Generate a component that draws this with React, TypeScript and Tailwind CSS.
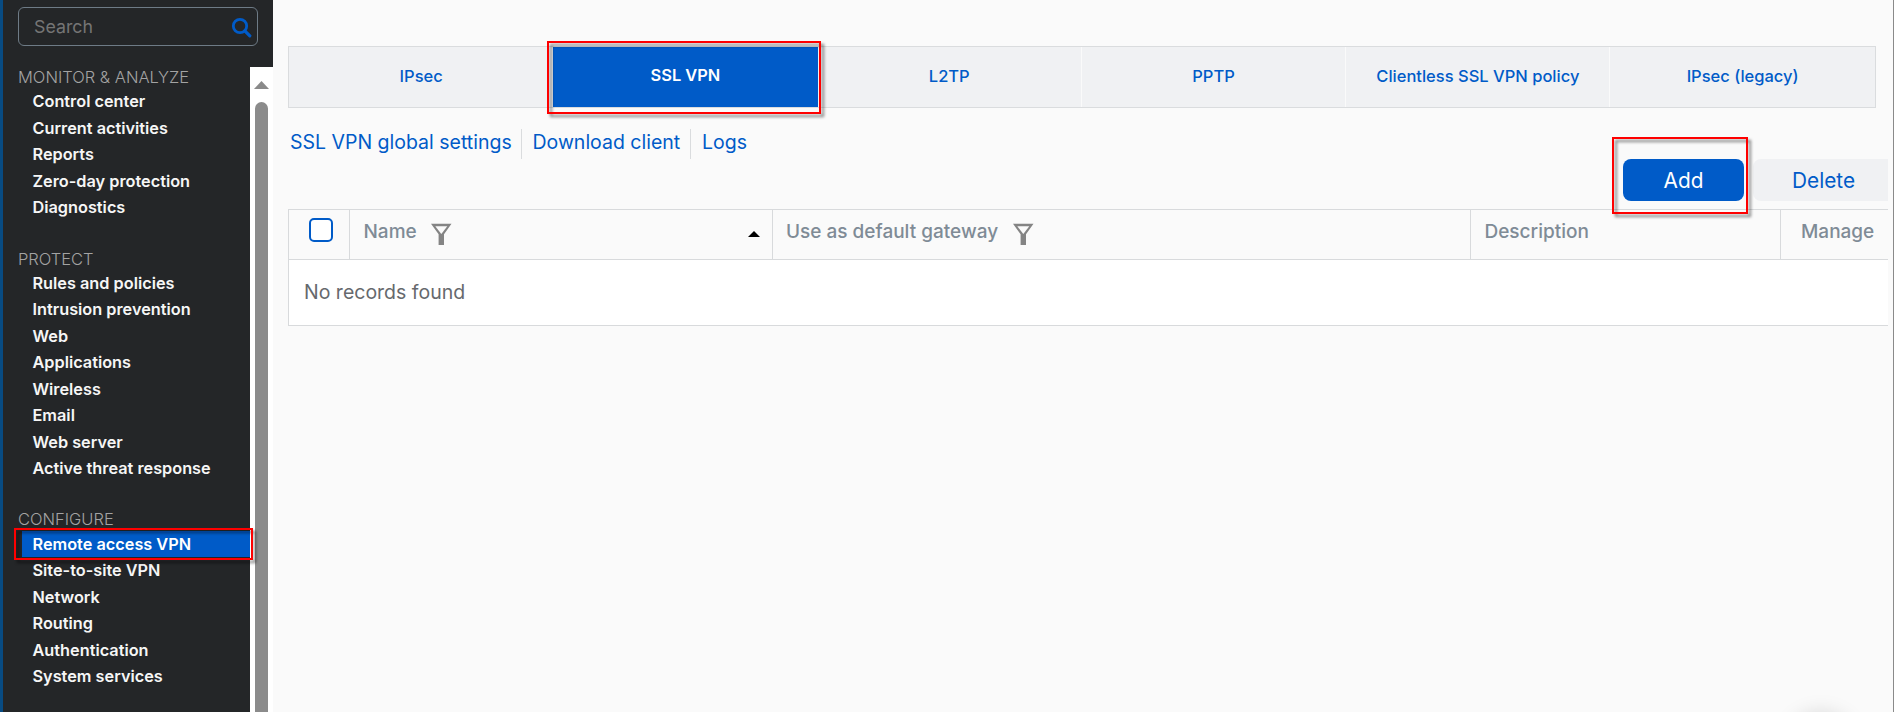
import React from "react";

const sections = [
  {
    title: "MONITOR & ANALYZE",
    items: ["Control center", "Current activities", "Reports", "Zero-day protection", "Diagnostics"],
  },
  {
    title: "PROTECT",
    items: [
      "Rules and policies",
      "Intrusion prevention",
      "Web",
      "Applications",
      "Wireless",
      "Email",
      "Web server",
      "Active threat response",
    ],
  },
  {
    title: "CONFIGURE",
    items: [
      "Remote access VPN",
      "Site-to-site VPN",
      "Network",
      "Routing",
      "Authentication",
      "System services",
    ],
  },
];

const tabs = ["IPsec", "SSL VPN", "L2TP", "PPTP", "Clientless SSL VPN policy", "IPsec (legacy)"];

/* Red outline that marks a control, with a soft drop shadow. */
function Marker({ className }: { className: string }) {
  return (
    <span
      className={`pointer-events-none absolute z-10 border-2 border-[#fe0000] drop-shadow-[3px_3px_1.5px_rgba(0,0,0,0.5)] ${className}`}
    />
  );
}

function FilterIcon() {
  return (
    <svg width="21" height="22" viewBox="0 0 21 22" className="shrink-0">
      <path d="M0 .8h20.5L13 11.3V22H7.6V11.3Z" fill="#848484" />
      <path d="M4.3 3.3h12L10.3 11Z" fill="#fafafa" />
    </svg>
  );
}

function Sidebar() {
  return (
    <aside className="flex h-full w-[273px] shrink-0 flex-col border-l-3 border-[#084b82] bg-[#242628]">
      <div className="flex h-[67px] shrink-0 items-start pt-[7px] pl-[15px]">
        <div className="flex h-[39px] w-[240px] items-center justify-between rounded-[6px] border border-[#6e7b86] pr-[5px] pl-[15px]">
          <span className="text-[17.8px] leading-[38px] text-[#757575]">Search</span>
          <svg width="21" height="21" viewBox="0 0 21 21" className="mt-px">
            <circle cx="9" cy="9" r="6.7" fill="none" stroke="#005bc8" strokeWidth="2.8" />
            <path d="M13.8 13.8l5 5" stroke="#005bc8" strokeWidth="3.2" strokeLinecap="round" />
          </svg>
        </div>
      </div>
      <div className="flex min-h-0 flex-1">
        <nav className="flex w-[247px] shrink-0 flex-col gap-[28px]">
          {sections.map((s) => (
            <section key={s.title} className="flex flex-col">
              <h2 className="h-[21.4px] pl-[15px] text-[16.5px] leading-[21px] font-light text-[#a3a3a3]">
                {s.title}
              </h2>
              {s.items.map((item) =>
                item === "Remote access VPN" ? (
                  <div
                    key={item}
                    className="relative ml-[19px] h-[26.45px] bg-[#005bc8] pl-[10.5px] text-[16.3px] leading-[26.45px] font-semibold text-white"
                  >
                    {item}
                    <Marker className="-top-[3px] -left-[8px] h-[32px] w-[239px]" />
                  </div>
                ) : (
                  <div
                    key={item}
                    className="h-[26.45px] pl-[29.5px] text-[16.3px] leading-[26.45px] font-semibold text-[#f6f6f6]"
                  >
                    {item}
                  </div>
                ),
              )}
            </section>
          ))}
        </nav>
        <div className="flex w-[23px] flex-col bg-white pl-[4px]">
          <svg width="15" height="8" viewBox="0 0 15 8" className="mt-[14px] shrink-0">
            <path d="M0 8L7.5 0 15 8Z" fill="#8a8a8a" />
          </svg>
          <div className="mt-[13px] ml-px w-[13px] flex-1 rounded-t-full bg-[#8b8b8b]" />
        </div>
      </div>
    </aside>
  );
}

function Tabs() {
  return (
    <div className="flex h-[62px] w-[1588px] border border-[#dadcde] bg-[#f0f1f3]">
      {tabs.map((t, i) =>
        t === "SSL VPN" ? (
          <div
            key={t}
            className="relative flex w-[264.3px] justify-center bg-[#005bc8] text-[16.4px] leading-[57px] font-semibold text-white"
          >
            {t}
            <Marker className="-top-[6px] -left-[6px] h-[73px] w-[274px]" />
          </div>
        ) : (
          <div
            key={t}
            className={`flex w-[264.3px] justify-center text-[16.5px] leading-[59px] font-medium text-[#005bc8] ${
              i > 1 && i < 5 ? "border-r border-[#fafafa]" : ""
            }`}
          >
            {t}
          </div>
        ),
      )}
    </div>
  );
}

function Table() {
  return (
    <div className="flex h-[117px] w-[1600px] flex-col border-y border-l border-[#d8dadc] bg-white">
      <div className="flex h-[50px] border-b border-[#d8dadc] bg-[#fafafa] text-[19px] leading-[43px] font-medium text-[#7f8b96]">
        <div className="flex w-[61px] border-r border-[#d8dadc] pt-[8px] pl-[20px]">
          <span className="size-[24px] rounded-[5px] border-2 border-[#005bc8] bg-white" />
        </div>
        <div className="flex w-[423px] items-start border-r border-[#d8dadc] pr-[12px] pl-[13.5px]">
          <span>Name</span>
          <span className="ml-[14.5px] flex pt-[13px]">
            <FilterIcon />
          </span>
          <svg width="12" height="6" viewBox="0 0 12 6" className="mt-[21px] ml-auto">
            <path d="M0 6L6 0l6 6Z" fill="#000" />
          </svg>
        </div>
        <div className="flex w-[698px] items-start border-r border-[#d8dadc] pl-[13px]">
          <span>Use as default gateway</span>
          <span className="ml-[15px] flex pt-[13px]">
            <FilterIcon />
          </span>
        </div>
        <div className="w-[310px] border-r border-[#d8dadc] pl-[13.5px]">Description</div>
        <div className="flex-1 pl-[20px]">Manage</div>
      </div>
      <div className="flex-1 pl-[15px] text-[19.5px] leading-[65px] text-[#66696d]">
        No records found
      </div>
    </div>
  );
}

export default function App() {
  return (
    <div className="flex h-[712px] w-[1894px] overflow-hidden bg-[#fafafa] font-['Inter',sans-serif]">
      <Sidebar />
      <main className="relative flex min-w-0 flex-1 flex-col overflow-hidden border-r border-[#8a8a8a] pt-[46px] pl-[15px]">
        <Tabs />
        <div className="mt-[21px] flex h-[30px] text-[19.5px] leading-[27px] text-[#005bc8]">
          <a className="w-[234px] border-r border-[#dadcde] pl-[2px]">SSL VPN global settings</a>
          <a className="w-[169px] border-r border-[#dadcde] pl-[10.5px]">Download client</a>
          <a className="pl-[11px]">Logs</a>
        </div>
        <div className="flex h-[50px] w-[1600px] justify-end gap-[9px]">
          <div className="relative h-[42px] w-[121px] rounded-[8px] bg-[#005bc8] text-center text-[20.8px] leading-[43px] text-white">
            Add
            <Marker className="-top-[22px] -left-[11px] h-[77px] w-[136px]" />
          </div>
          <div className="h-[42px] w-[135px] rounded-l-[8px] bg-[#f0f1f3] pl-[39px] text-[20.8px] leading-[43px] text-[#005bc8]">
            Delete
          </div>
        </div>
        <Table />
        <div className="absolute -bottom-[65px] left-[1518px] size-[60px] rounded-full shadow-[0_0_22px_2px_rgba(0,0,0,0.18)]" />
      </main>
    </div>
  );
}
